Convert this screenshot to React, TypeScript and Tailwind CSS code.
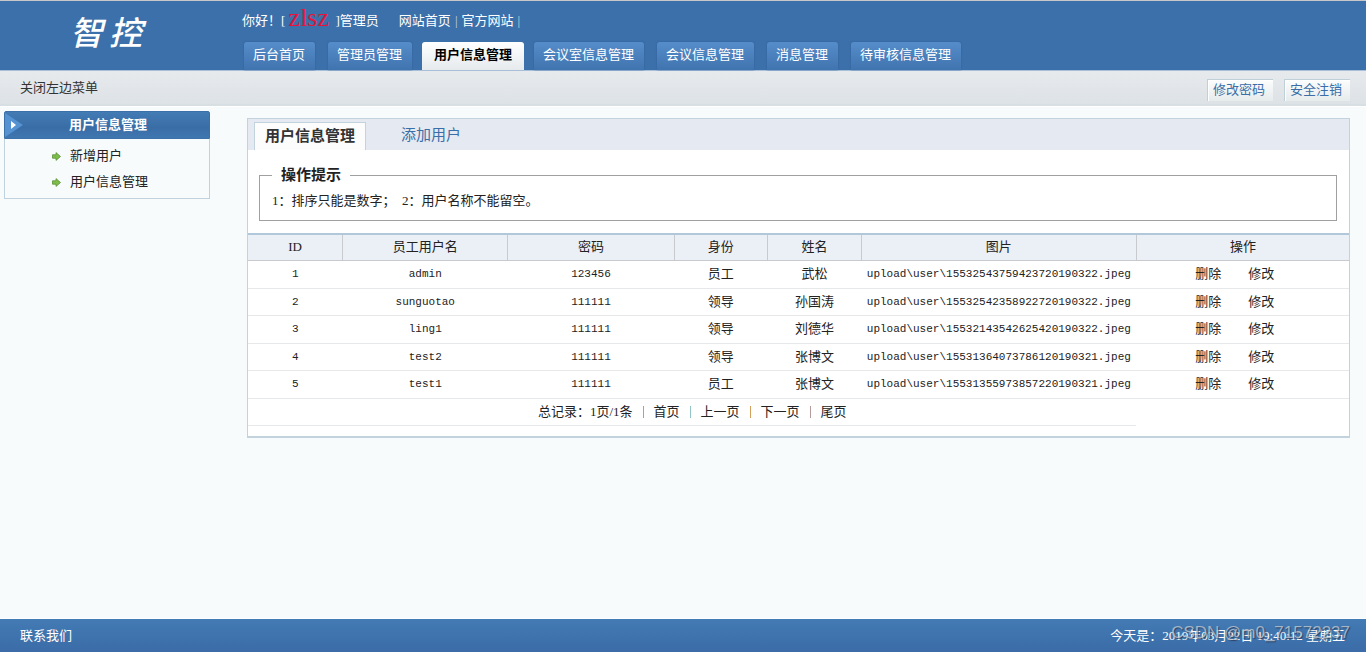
const CJK = "font-['Liberation_Serif','Noto_Sans_CJK_SC',serif]";

const tabs = ['后台首页', '管理员管理', '用户信息管理', '会议室信息管理', '会议信息管理', '消息管理', '待审核信息管理'];
const activeTab = '用户信息管理';

const users = [
  { id: 1, name: 'admin', password: '123456', role: '员工', realName: '武松', image: 'upload\\user\\15532543759423720190322.jpeg' },
  { id: 2, name: 'sunguotao', password: '111111', role: '领导', realName: '孙国涛', image: 'upload\\user\\15532542358922720190322.jpeg' },
  { id: 3, name: 'ling1', password: '111111', role: '领导', realName: '刘德华', image: 'upload\\user\\15532143542625420190322.jpeg' },
  { id: 4, name: 'test2', password: '111111', role: '领导', realName: '张博文', image: 'upload\\user\\15531364073786120190321.jpeg' },
  { id: 5, name: 'test1', password: '111111', role: '员工', realName: '张博文', image: 'upload\\user\\15531355973857220190321.jpeg' },
];

const columns = [
  { label: 'ID', width: 'w-[8.6%]' },
  { label: '员工用户名', width: 'w-[15%]' },
  { label: '密码', width: 'w-[15.1%]' },
  { label: '身份', width: 'w-[8.5%]' },
  { label: '姓名', width: 'w-[8.5%]' },
  { label: '图片', width: 'w-[25%]' },
  { label: '操作', width: 'w-[19.3%]' },
];

function Header() {
  return (
    <header className="flex h-[71px] border-t border-b border-t-[#c8c8c8] border-b-[#a9bfd8] bg-[#3c70aa] text-white">
      <div className="flex w-[244px] shrink-0 items-center pb-[2px] pl-[70px]">
        <h1 className="flex gap-[6px] text-[33px] leading-none font-medium italic">
          <span>智</span>
          <span>控</span>
        </h1>
      </div>
      <div className="flex min-w-0 flex-1 flex-col justify-between">
        <div className="-ml-[2px] flex h-10 items-center whitespace-pre">
          <span>你好！[ </span>
          <span className="pb-[6px] text-[26px] leading-6 text-[#e6143c]">zlsz</span>
          <span>  ]管理员</span>
          <a href="#home" className="ml-5">网站首页</a>
          <span className="px-1 text-[#c9d5dc]">|</span>
          <a href="#site">官方网站</a>
          <span className="px-1 text-[#c9d5dc]">|</span>
        </div>
        <nav className="flex">
          {tabs.map((tab, i) =>
            tab === activeTab ? (
              <a
                key={tab}
                href={`#tab-${i}`}
                aria-current="page"
                className="-ml-[3px] mr-[10px] flex h-7 items-center rounded-t-[3px] bg-linear-to-b from-white to-[#e6eaed] px-3 pb-[2px] font-bold text-black"
              >
                {tab}
              </a>
            ) : (
              <a
                key={tab}
                href={`#tab-${i}`}
                className="mr-[13px] flex h-7 items-center rounded-t-[3px] bg-linear-to-b from-[#558dca] to-[#4074af] pr-[10px] pb-[2px] pl-[9px] shadow-[0_0_2px_#305f98]"
              >
                {tab}
              </a>
            ),
          )}
        </nav>
      </div>
    </header>
  );
}

function Toolbar() {
  const action =
    'h-[22px] border-t border-l border-[#c0d0d8] bg-linear-to-b from-[#fcfdfd] to-[#e6ebec] pr-2 pl-[5px] leading-5 text-[#3a6ea8] shadow-[inset_1px_1px_0_#fff]';
  return (
    <div className="flex h-[35px] items-center justify-between border-b-2 border-[#d8dfe3] bg-linear-to-b from-[#e7eaed] to-[#dde2e6] pr-4 pl-5 shadow-[0_1px_0_#fff]">
      <button type="button" className="text-[#333]">关闭左边菜单</button>
      <div className="flex gap-[11px] pt-1">
        <button type="button" className={action}>修改密码</button>
        <button type="button" className={action}>安全注销</button>
      </div>
    </div>
  );
}

function GreenArrow() {
  return (
    <svg width="9" height="9" viewBox="0 0 9 9" aria-hidden="true">
      <path d="M0.5 2.8H4V0.6L8.5 4.5L4 8.4V6.2H0.5Z" fill="#7fbd4b" stroke="#5a9236" strokeWidth="0.8" />
    </svg>
  );
}

function Sidebar() {
  return (
    <aside className="mt-[5px] w-[206px] shrink-0 self-start">
      <h2 className="flex h-7 items-center rounded-t-[2px] border border-[#3c70a8] bg-linear-to-b from-[#437bb4] via-[#3a6da6] via-60% to-[#4077b1] font-bold text-white">
        <svg width="18" height="26" viewBox="0 0 18 26" aria-hidden="true">
          <path d="M0 1L18 13L0 25Z" fill="#5592d2" />
          <path d="M6 9L11 13L6 17Z" fill="#fff" />
        </svg>
        <span className="flex-1 pr-[16px] text-center">用户信息管理</span>
      </h2>
      <ul className="border border-t-0 border-[#bfd2de] pt-1 pb-[3px] pl-[47px]">
        {['新增用户', '用户信息管理'].map((item) => (
          <li key={item} className="flex h-[26px] items-center gap-[9px]">
            <GreenArrow />
            <a href="#menu">{item}</a>
          </li>
        ))}
      </ul>
    </aside>
  );
}

function UserTable() {
  const latin = "font-['Liberation_Mono',monospace] text-[11px]";
  return (
    <table className="w-full table-fixed border-collapse text-center">
      <thead>
        <tr className="h-[26px] border-t-2 border-b border-t-[#b1c8da] border-b-[#c8cace] bg-[#ebeff6]">
          {columns.map((c) => (
            <th key={c.label} scope="col" className={`${c.width} border-r border-[#c8cace] p-0 font-normal last:border-r-0`}>
              {c.label}
            </th>
          ))}
        </tr>
      </thead>
      <tbody>
        {users.map((u) => (
          <tr key={u.id} className="border-b border-[#e6e8ea] odd:h-7 even:h-[27px]">
            <td className={latin}>{u.id}</td>
            <td className={latin}>{u.name}</td>
            <td className={latin}>{u.password}</td>
            <td>{u.role}</td>
            <td>{u.realName}</td>
            <td className={`${latin} whitespace-nowrap`}>{u.image}</td>
            <td>
              <div className="flex justify-center gap-[27px] pr-4">
                <a href="#delete">删除</a>
                <a href="#edit">修改</a>
              </div>
            </td>
          </tr>
        ))}
        <tr className="h-[27px]">
          <td colSpan={6} className="border-b border-[#e6e8ea]">
            <div className="flex items-center justify-center gap-[10px]">
              <span>总记录：1页/1条</span>
              <span className="h-3 w-px bg-[#b79a9a]" />
              <a href="#first">首页</a>
              <span className="h-3 w-px bg-[#93c4c8]" />
              <a href="#prev">上一页</a>
              <span className="h-3 w-px bg-[#d3a05c]" />
              <a href="#next">下一页</a>
              <span className="h-3 w-px bg-[#b79a9a]" />
              <a href="#last">尾页</a>
            </div>
          </td>
          <td />
        </tr>
      </tbody>
    </table>
  );
}

function MainPanel() {
  return (
    <main className="mt-3 min-w-0 flex-1 self-start border border-b-2 border-[#c3d3dd] bg-white pb-[10px]">
      <div className="flex h-[31px] items-end bg-[#e5e9f2] pl-[6px] text-[15px]">
        <a href="#list" className="h-7 border border-b-0 border-[#c3d3dd] bg-[#fcfcfc] px-[10px] leading-[26px] font-bold text-[#333]">
          用户信息管理
        </a>
        <a href="#add" className="h-7 px-[35px] leading-[26px] text-[#3a6ea8]">
          添加用户
        </a>
      </div>
      <fieldset className="mr-3 mb-3 ml-[11px] mt-[13px] border border-[#a0a0a0] pl-3">
        <legend className="px-[9px] text-[15px] leading-6 font-bold">操作提示</legend>
        <p className="pt-[2px] pb-[7px] leading-6">1：排序只能是数字；&nbsp; 2：用户名称不能留空。</p>
      </fieldset>
      <UserTable />
    </main>
  );
}

function Footer() {
  return (
    <footer className="relative flex h-[34px] items-center justify-between border-t border-white bg-linear-to-b from-[#437bb4] to-[#3b6ca7] pr-[21px] pl-5 text-white">
      <a href="#contact">联系我们</a>
      <p>今天是：2019年03月22日 19:40:12 星期五</p>
      <span className="absolute right-4 bottom-[9px] font-['Liberation_Sans',sans-serif] text-[17px] leading-5 text-[#c6cdd6]/75 [text-shadow:1px_1px_1px_rgba(30,40,60,0.65)]">
        CSDN @m0_71572237
      </span>
    </footer>
  );
}

export default function App() {
  return (
    <div lang="zh-CN" className={`${CJK} flex min-h-screen flex-col bg-[#f7fbfc] text-[13px] leading-5 text-[#222]`}>
      <Header />
      <Toolbar />
      <div className="flex flex-1 gap-[37px] pr-4 pb-6 pl-1">
        <Sidebar />
        <MainPanel />
      </div>
      <Footer />
    </div>
  );
}
